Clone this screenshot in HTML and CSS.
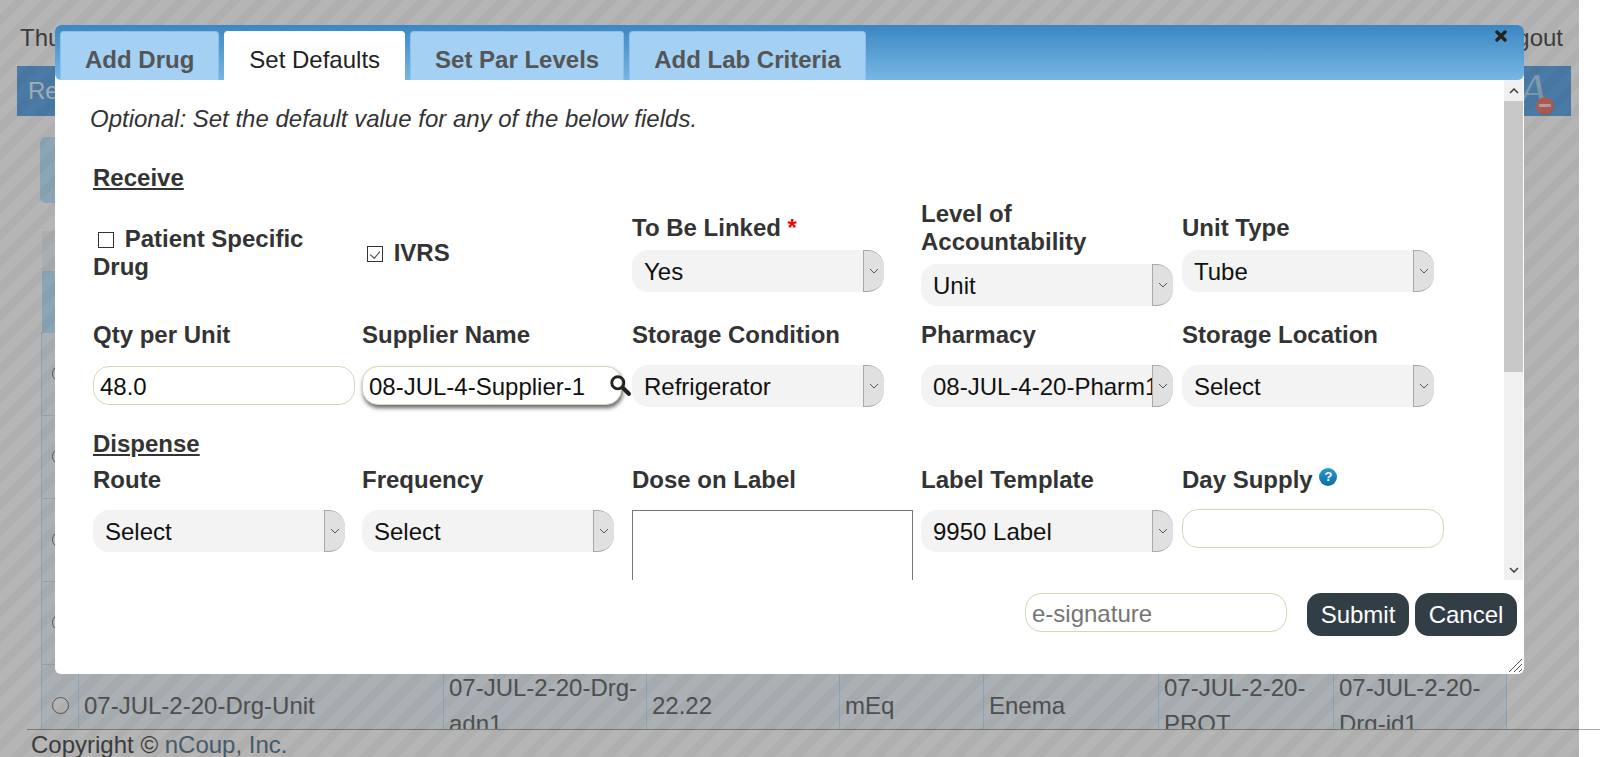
FILE: index.html
```html
<!DOCTYPE html>
<html>
    <head>
        <title>Set Defaults</title>
        <meta name="viewport" content="width=device-width, initial-scale=1">
        <link rel="stylesheet" href="styles.css">
    </head>
    <body>
        <div class="page">
            <header class="topline">
                <span>Thursday</span>
                <a href="#">Logout</a>
            </header>
            <nav class="menubar">
                <span>Receive</span>
                <span class="font-icon">A<i class="minus"></i></span>
            </nav>
            <main class="content">
                <div class="panel"></div>
                <table class="drugs">
                    <colgroup>
                        <col class="c-radio"><col class="c-unit"><col class="c-adn"><col class="c-qty">
                        <col class="c-uom"><col class="c-route"><col class="c-prot"><col class="c-id">
                    </colgroup>
                    <tr class="search-row"><th colspan="8">Search</th></tr>
                    <tr class="head-row"><th></th><th></th><th></th><th></th><th></th><th></th><th></th><th></th></tr>
                    <tr class="empty-row"><td><input type="radio" name="drug"></td><td></td><td></td><td></td><td></td><td></td><td></td><td></td></tr>
                    <tr class="empty-row"><td><input type="radio" name="drug"></td><td></td><td></td><td></td><td></td><td></td><td></td><td></td></tr>
                    <tr class="empty-row"><td><input type="radio" name="drug"></td><td></td><td></td><td></td><td></td><td></td><td></td><td></td></tr>
                    <tr class="empty-row"><td><input type="radio" name="drug"></td><td></td><td></td><td></td><td></td><td></td><td></td><td></td></tr>
                    <tr>
                        <td><input type="radio" name="drug"></td>
                        <td>07-JUL-2-20-Drg-Unit</td>
                        <td>07-JUL-2-20-Drg-adn1</td>
                        <td>22.22</td>
                        <td>mEq</td>
                        <td>Enema</td>
                        <td>07-JUL-2-20-PROT</td>
                        <td>07-JUL-2-20-Drg-id1</td>
                    </tr>
                </table>
            </main>
            <footer class="copyright">Copyright &copy; <a href="#">nCoup, Inc.</a></footer>
        </div>

        <div class="overlay"></div>

        <section class="dialog">
            <div class="titlebar">
                <a class="tab" href="#">Add Drug</a>
                <a class="tab active" href="#">Set Defaults</a>
                <a class="tab" href="#">Set Par Levels</a>
                <a class="tab" href="#">Add Lab Criteria</a>
                <svg class="close" viewBox="0 0 12 12" width="12" height="12"><path d="M2 2l8 8M10 2l-8 8" stroke="#222" stroke-width="3.4" stroke-linecap="round"/></svg>
            </div>
            <div class="body">
                <div class="scroller">
                    <p class="note">Optional: Set the default value for any of the below fields.</p>
                    <h4 class="heading first">Receive</h4>
                    <div class="grid tight">
                        <label class="check patient"><input type="checkbox"> Patient Specific Drug</label>
                        <label class="check ivrs"><input type="checkbox" checked> IVRS</label>
                        <div class="field">
                            <label>To Be Linked <span class="req">*</span></label>
                            <div class="select"><select><option>Yes</option></select><span class="arrow"><svg viewBox="0 0 10 6" width="10" height="6"><path d="M1 1l4 4 4-4" fill="none" stroke="#555"/></svg></span></div>
                        </div>
                        <div class="field">
                            <label class="wrap">Level of Accountability</label>
                            <div class="select"><select><option>Unit</option></select><span class="arrow"><svg viewBox="0 0 10 6" width="10" height="6"><path d="M1 1l4 4 4-4" fill="none" stroke="#555"/></svg></span></div>
                        </div>
                        <div class="field">
                            <label>Unit Type</label>
                            <div class="select"><select><option>Tube</option></select><span class="arrow"><svg viewBox="0 0 10 6" width="10" height="6"><path d="M1 1l4 4 4-4" fill="none" stroke="#555"/></svg></span></div>
                        </div>
                    </div>
                    <div class="grid second">
                        <div class="field">
                            <label>Qty per Unit</label>
                            <input class="text" type="text" value="48.0">
                        </div>
                        <div class="field">
                            <label>Supplier Name</label>
                            <div class="lookup">
                                <input class="text" type="text" value="08-JUL-4-Supplier-1">
                                <svg class="search" viewBox="0 0 20 20" width="22" height="22"><circle cx="8" cy="8" r="5.5" fill="none" stroke="#222" stroke-width="2.6"/><path d="M12.5 12.5l5.5 5.5" stroke="#222" stroke-width="3.8" stroke-linecap="round"/></svg>
                            </div>
                        </div>
                        <div class="field">
                            <label>Storage Condition</label>
                            <div class="select"><select><option>Refrigerator</option></select><span class="arrow"><svg viewBox="0 0 10 6" width="10" height="6"><path d="M1 1l4 4 4-4" fill="none" stroke="#555"/></svg></span></div>
                        </div>
                        <div class="field">
                            <label>Pharmacy</label>
                            <div class="select"><select><option>08-JUL-4-20-Pharm1</option></select><span class="arrow"><svg viewBox="0 0 10 6" width="10" height="6"><path d="M1 1l4 4 4-4" fill="none" stroke="#555"/></svg></span></div>
                        </div>
                        <div class="field">
                            <label>Storage Location</label>
                            <div class="select"><select><option>Select</option></select><span class="arrow"><svg viewBox="0 0 10 6" width="10" height="6"><path d="M1 1l4 4 4-4" fill="none" stroke="#555"/></svg></span></div>
                        </div>
                    </div>
                    <h4 class="heading">Dispense</h4>
                    <div class="grid">
                        <div class="field">
                            <label>Route</label>
                            <div class="select"><select><option>Select</option></select><span class="arrow"><svg viewBox="0 0 10 6" width="10" height="6"><path d="M1 1l4 4 4-4" fill="none" stroke="#555"/></svg></span></div>
                        </div>
                        <div class="field">
                            <label>Frequency</label>
                            <div class="select"><select><option>Select</option></select><span class="arrow"><svg viewBox="0 0 10 6" width="10" height="6"><path d="M1 1l4 4 4-4" fill="none" stroke="#555"/></svg></span></div>
                        </div>
                        <div class="field">
                            <label>Dose on Label</label>
                            <textarea class="dose"></textarea>
                        </div>
                        <div class="field">
                            <label>Label Template</label>
                            <div class="select"><select><option>9950 Label</option></select><span class="arrow"><svg viewBox="0 0 10 6" width="10" height="6"><path d="M1 1l4 4 4-4" fill="none" stroke="#555"/></svg></span></div>
                        </div>
                        <div class="field day-supply">
                            <label>Day Supply <span class="help">?</span></label>
                            <input class="text" type="text">
                        </div>
                    </div>
                </div>
                <div class="scrollbar">
                    <span class="sb-btn"><svg viewBox="0 0 10 6" width="10" height="6"><path d="M1 5l4-4 4 4" fill="none" stroke="#444" stroke-width="1.6"/></svg></span>
                    <span class="sb-thumb"></span>
                    <span class="sb-track"></span>
                    <span class="sb-btn"><svg viewBox="0 0 10 6" width="10" height="6"><path d="M1 1l4 4 4-4" fill="none" stroke="#444" stroke-width="1.6"/></svg></span>
                </div>
            </div>
            <div class="actions">
                <input class="text esign" type="password" placeholder="e-signature">
                <button class="submit">Submit</button>
                <button>Cancel</button>
            </div>
            <svg class="grip" viewBox="0 0 14 14" width="14" height="14"><path d="M1 14L14 1M6 14L14 6M11 14l3-3" stroke="#555" fill="none"/></svg>
        </section>
    </body>
</html>
```

FILE: styles.css
```css
* {
    box-sizing: border-box;
}

html, body {
    margin: 0;
    height: 100%;
    overflow: hidden;
    background: white;
}

body {
    position: relative;
    font: 24px/28px "Liberation Sans", Arial, sans-serif;
    color: #333;
}

a {
    text-decoration: none;
}

/* page behind the dialog */
.page {
    display: flex;
    flex-direction: column;
    height: 757px;
    color: #555;
}

.topline {
    display: flex;
    justify-content: space-between;
    width: 1543px;
    margin: 24px 0 14px 20px;
}

.topline a {
    color: #555;
}

.menubar {
    display: flex;
    justify-content: space-between;
    align-items: center;
    width: 1554px;
    height: 50px;
    margin-left: 17px;
    padding: 0 24px 0 11px;
    background: #68adeb;
    color: #eaf4fc;
}

.font-icon {
    position: relative;
    font: italic 46px/50px "Liberation Serif", serif;
    color: #b4d8f5;
}

.minus {
    position: absolute;
    right: -7px;
    bottom: 1px;
    width: 18px;
    height: 18px;
    border-radius: 50%;
    background: #f08070;
}

.minus::after {
    content: "";
    position: absolute;
    left: 3px;
    top: 7px;
    width: 12px;
    height: 3px;
    background: #f8dcd8;
}

.content {
    flex: 1;
    min-height: 0;
    overflow: hidden;
    padding: 21px 0 0 40px;
}

.panel {
    width: 1467px;
    height: 66px;
    margin-bottom: 28px;
    border-radius: 6px;
    background: #c4e9ff;
}

.drugs {
    width: 1465px;
    margin-left: 1px;
    table-layout: fixed;
    border-collapse: collapse;
    line-height: 36px;
    color: #707070;
}

.c-radio { width: 37px; }
.c-unit { width: 365px; }
.c-adn { width: 203px; }
.c-qty { width: 193px; }
.c-uom { width: 144px; }
.c-route { width: 175px; }
.c-prot { width: 175px; }
.c-id { width: 173px; }

.drugs td {
    padding: 5px;
    border: 1px solid #c4e7ff;
    background: #eff8fd;
    text-align: left;
}

.drugs td:first-child {
    text-align: center;
    padding: 0 0 4px;
}

.drugs input {
    width: 17px;
    height: 17px;
    margin: 0;
    vertical-align: middle;
}

.search-row th {
    height: 40px;
    padding-left: 13px;
    background: #eff5f8;
    font-weight: normal;
    text-align: left;
}

.head-row th {
    height: 61px;
    background: #c4e9ff;
}

.empty-row td {
    height: 83px;
}

.copyright {
    height: 28px;
    margin-left: 27px;
    padding: 1px 0 0 4px;
    border-top: 1px solid #a8ad9c;
}

.copyright a {
    color: #638297;
}

.overlay {
    position: absolute;
    top: 0;
    left: 0;
    width: 1579px;
    height: 100%;
    background: repeating-linear-gradient(135deg, rgba(0, 0, 0, .29) 0 10px, rgba(0, 0, 0, .312) 10px 19px);
}

/* dialog */
.dialog {
    position: absolute;
    top: 25px;
    left: 55px;
    width: 1469px;
    height: 649px;
    display: flex;
    flex-direction: column;
    background: white;
    border-radius: 6px;
}

.titlebar {
    position: relative;
    display: flex;
    align-items: flex-end;
    gap: 5px;
    height: 55px;
    padding-left: 5px;
    border-radius: 6px;
    background: linear-gradient(#3b87c2, #78b6e4);
}

.tab {
    height: 49px;
    padding: 14px 24px 0;
    border: 1px solid #8cc0ea;
    border-bottom: 0;
    border-radius: 4px 4px 0 0;
    background: #a3d0f3;
    color: #555;
    font-weight: bold;
}

.tab.active {
    background: white;
    border-color: white;
    color: #222;
    font-weight: normal;
}

.close {
    position: absolute;
    top: 5px;
    right: 17px;
}

.body {
    display: flex;
    height: 500px;
}

.scroller {
    flex: 1;
    min-width: 0;
    overflow: hidden;
    padding: 25px 0 0 38px;
}

.note {
    margin: 0 0 31px -3px;
    font-style: italic;
}

.heading {
    margin: 0 0 8px;
    font-size: 24px;
    text-decoration: underline;
}

.grid {
    display: grid;
    grid-template-columns: 269px 270px 289px 261px 262px;
    align-items: start;
}

.grid.tight {
    align-items: center;
    height: 106px;
}

.grid.second {
    margin-top: 15px;
    margin-bottom: 23px;
}

.field {
    display: flex;
    flex-direction: column;
    gap: 16px;
    font-weight: bold;
}

.tight .field {
    gap: 8px;
}

.wrap {
    width: 200px;
}

.check {
    font-weight: bold;
}

.check input {
    appearance: none;
    position: relative;
    width: 16px;
    height: 16px;
    margin: 0 4px 0 0;
    border: 1px solid #333;
    background: white;
    vertical-align: -1px;
}

.check input:checked::after {
    content: "";
    position: absolute;
    left: 4px;
    top: 2px;
    width: 5px;
    height: 8px;
    border: solid #444;
    border-width: 0 1px 1px 0;
    transform: rotate(40deg);
}

.patient {
    width: 240px;
    text-indent: 5px;
}

.ivrs {
    padding-left: 5px;
}

.req {
    color: red;
}

.help {
    display: inline-block;
    width: 18px;
    height: 18px;
    border-radius: 50%;
    background: linear-gradient(#2a98cc, #0c6ea6);
    color: white;
    font-size: 13px;
    line-height: 18px;
    text-align: center;
    vertical-align: 7px;
}

.select {
    display: flex;
    width: 252px;
    height: 42px;
    border-radius: 16px;
    overflow: hidden;
    background: #f3f3f3;
}

.select select {
    appearance: none;
    flex: 1;
    min-width: 0;
    padding: 0 0 0 12px;
    border: 0;
    background: transparent;
    font: 24px "Liberation Sans", Arial, sans-serif;
    color: #111;
}

.arrow {
    display: flex;
    align-items: center;
    justify-content: center;
    width: 21px;
    background: #e0e0e0;
    border: 1px solid #a8a8a8;
    border-width: 1px 0 1px 1px;
    border-radius: 0 16px 16px 0;
}

.text {
    width: 262px;
    height: 39px;
    padding: 3px 6px 0;
    border: 1px solid #d6d6ba;
    border-radius: 16px;
    background: white;
    font: 24px "Liberation Sans", Arial, sans-serif;
    color: #111;
    outline: 0;
}

.text::placeholder {
    color: #757575;
}

.second .text {
    margin-top: 1px;
}

.lookup {
    position: relative;
}

.lookup .text {
    width: 260px;
    box-shadow: 1px 3px 4px #666;
}

.search {
    position: absolute;
    top: 9px;
    right: 1px;
}

.day-supply .text {
    margin-top: -1px;
}

.dose {
    width: 281px;
    height: 120px;
    border: 1px solid #777;
    border-radius: 0;
    resize: none;
    outline: 0;
    background: white;
}

.scrollbar {
    display: flex;
    flex-direction: column;
    width: 19px;
    margin-right: 1px;
    background: #f0f0f0;
}

.sb-btn {
    display: flex;
    align-items: center;
    justify-content: center;
    height: 21px;
}

.sb-thumb {
    height: 271px;
    background: #c8c8c8;
}

.sb-track {
    flex: 1;
}

.actions {
    display: flex;
    justify-content: flex-end;
    align-items: flex-start;
    gap: 6px;
    padding: 13px 7px 0 0;
}

.esign {
    margin-right: 14px;
}

.actions button {
    width: 102px;
    height: 43px;
    padding: 0;
    border: 0;
    border-radius: 14px;
    background: #323e46;
    color: white;
    font: 24px "Liberation Sans", Arial, sans-serif;
}

.grip {
    position: absolute;
    right: 2px;
    bottom: 2px;
}
```
